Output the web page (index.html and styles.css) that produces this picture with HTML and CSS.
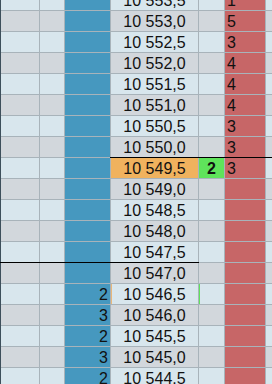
FILE: index.html
```html
<!DOCTYPE html>
<html lang="en">
<head>
    <meta charset="UTF-8">
    <meta name="viewport" content="width=device-width, initial-scale=1.0">
    <title>DOM Ladder</title>
    <link rel="stylesheet" href="styles.css">
</head>
<body>

<div class="ladder" id="ladder"></div>

<script>
    // price levels from top to bottom, in ticks of 0.5
    const topPrice = 10553.5;
    const levels = 19;

    const asks = { '10553.5': 1, '10553': 5, '10552.5': 3, '10552': 4, '10551.5': 4, '10551': 4, '10550.5': 3, '10550': 3, '10549.5': 3 };
    const bids = { '10546.5': 2, '10546': 3, '10545.5': 2, '10545': 3, '10544.5': 2 };
    const trades = { '10549.5': 2 };
    const lastPrice = 10549.5;
    const midLine = 10547;
    const cursor = 10546.5;

    function formatPrice(p) {
        const whole = Math.floor(p);
        const str = String(whole);
        return str.slice(0, 2) + ' ' + str.slice(2) + ',' + (p % 1 ? '5' : '0');
    }

    function cell(cls, text) {
        const div = document.createElement('div');
        div.className = 'cell ' + cls;
        if (text !== undefined) div.textContent = text;
        return div;
    }

    const ladder = document.getElementById('ladder');

    for (let i = 0; i < levels; i++) {
        const price = topPrice - i * 0.5;
        const key = String(price);
        const row = document.createElement('div');
        row.className = 'row ' + (i % 2 ? 'row-dark' : 'row-light');

        const c1 = cell('col-a');
        const c2 = cell('col-b');
        const bid = cell('col-bid', bids[key]);
        const pr = cell('col-price', formatPrice(price));
        const trd = cell('col-trade', trades[key]);
        const ask = cell('col-ask', asks[key]);
        const end = cell('col-end');

        if (price === lastPrice) {
            pr.classList.add('last');
            trd.classList.add('traded');
            [pr, trd, ask, end].forEach(c => c.classList.add('line-top'));
        }
        if (price === midLine) {
            [c1, c2, bid, pr].forEach(c => c.classList.add('line-top'));
        }
        if (price === cursor) {
            pr.classList.add('cursor');
            trd.classList.add('cursor-trade');
        }

        [c1, c2, bid, pr, trd, ask, end].forEach(c => row.appendChild(c));
        ladder.appendChild(row);
    }
</script>

</body>
</html>
```

FILE: styles.css
```css
body {
    margin: 0;
    padding: 0;
    width: 272px;
    height: 384px;
    overflow: hidden;
    background-color: #a8b3ba;
    font-family: "Liberation Sans", Arial, sans-serif;
    font-size: 16px;
    color: #111;
}
.ladder {
    display: flex;
    flex-direction: column;
    gap: 1px;
    margin-top: -10px;
    border-left: 1px solid #3d4f5b;
}
.row {
    display: grid;
    grid-template-columns: 38px 24px 45px 87px 25px 40px 6px;
    column-gap: 1px;
    height: 20px;
}
.cell {
    position: relative;
    height: 20px;
    line-height: 22px;
    white-space: nowrap;
}
.row-light .cell {
    background-color: #d8e6ed;
}
.row-dark .cell {
    background-color: #d2d7dc;
}
.row .col-bid {
    background-color: #4698bf;
    text-align: right;
    padding-right: 2px;
}
.col-price {
    text-align: center;
}
.row .col-price.last {
    background-color: #f0b25e;
}
.col-trade {
    text-align: center;
    font-weight: bold;
}
.row .col-trade.traded {
    background-color: #5fe35b;
}
.row .col-ask {
    background-color: #c76667;
    padding-left: 2px;
}
.line-top::before {
    content: "";
    position: absolute;
    top: -1px;
    left: -1px;
    right: -1px;
    height: 1px;
    background-color: #000;
}
.cursor {
    box-shadow: inset 1px 0 0 #e8b77a;
}
.cursor-trade {
    box-shadow: inset 1px 0 0 #5fe35b;
}
```
